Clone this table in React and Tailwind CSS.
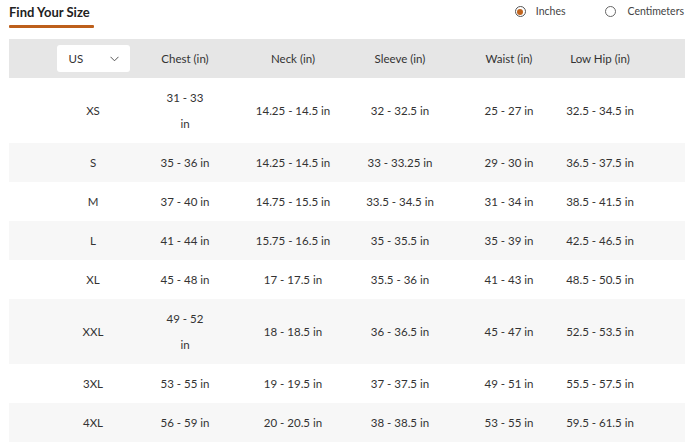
import React from "react";

const rows = [
  { size: "XS", chest: ["31 - 33", "in"], neck: "14.25 - 14.5 in", sleeve: "32 - 32.5 in", waist: "25 - 27 in", hip: "32.5 - 34.5 in" },
  { size: "S", chest: "35 - 36 in", neck: "14.25 - 14.5 in", sleeve: "33 - 33.25 in", waist: "29 - 30 in", hip: "36.5 - 37.5 in" },
  { size: "M", chest: "37 - 40 in", neck: "14.75 - 15.5 in", sleeve: "33.5 - 34.5 in", waist: "31 - 34 in", hip: "38.5 - 41.5 in" },
  { size: "L", chest: "41 - 44 in", neck: "15.75 - 16.5 in", sleeve: "35 - 35.5 in", waist: "35 - 39 in", hip: "42.5 - 46.5 in" },
  { size: "XL", chest: "45 - 48 in", neck: "17 - 17.5 in", sleeve: "35.5 - 36 in", waist: "41 - 43 in", hip: "48.5 - 50.5 in" },
  { size: "XXL", chest: ["49 - 52", "in"], neck: "18 - 18.5 in", sleeve: "36 - 36.5 in", waist: "45 - 47 in", hip: "52.5 - 53.5 in" },
  { size: "3XL", chest: "53 - 55 in", neck: "19 - 19.5 in", sleeve: "37 - 37.5 in", waist: "49 - 51 in", hip: "55.5 - 57.5 in" },
  { size: "4XL", chest: "56 - 59 in", neck: "20 - 20.5 in", sleeve: "38 - 38.5 in", waist: "53 - 55 in", hip: "59.5 - 61.5 in" },
];

function Cell({ w, children }) {
  return (
    <div className={`${w} flex flex-col items-center justify-center whitespace-nowrap text-center`}>
      {children}
    </div>
  );
}

export default function App() {
  return (
    <div className="w-[700px] h-[445px] bg-white text-[#333333] font-['Lato',sans-serif] overflow-hidden">
      <div className="flex justify-between h-[39px] pl-[9px] pr-[16px]">
        <div className="flex flex-col">
          <div className="pt-[4px] text-[13px] leading-[16px] font-bold text-[#222222]">Find Your Size</div>
          <div className="mt-[5px] h-[3px] w-[85px] bg-[#bd5f1b] rounded-[1px]" />
        </div>
        <div className="flex items-center h-[23px] text-[10.5px] text-[#444444]">
          <div className="w-[11px] h-[11px] rounded-full border border-[#555555] flex items-center justify-center">
            <div className="w-[6px] h-[6px] rounded-full bg-[#c0641e]" />
          </div>
          <span className="ml-[10px]">Inches</span>
          <div className="ml-[39px] w-[11px] h-[11px] rounded-full border border-[#666666]" />
          <span className="ml-[12px]">Centimeters</span>
        </div>
      </div>

      <div className="ml-[9px] w-[676px] text-[11.5px]">
        <div className="flex h-[39px] bg-[#e6e6e6] pl-[38px]">
          <Cell w="w-[92px]">
            <div className="w-[73px] h-[27px] bg-white rounded-[3px] flex items-center justify-between pl-[12px] pr-[11px]">
              <span className="text-[11.5px]">US</span>
              <svg width="9" height="6" viewBox="0 0 9 6" fill="none">
                <polyline points="0.5,0.8 4.5,4.8 8.5,0.8" stroke="#555555" strokeWidth="1" />
              </svg>
            </div>
          </Cell>
          <Cell w="w-[92px]">Chest (in)</Cell>
          <Cell w="w-[124px]">Neck (in)</Cell>
          <Cell w="w-[90px]">Sleeve (in)</Cell>
          <Cell w="w-[128px]">Waist (in)</Cell>
          <Cell w="w-[54px]">Low Hip (in)</Cell>
        </div>
        {rows.map((r, i) => (
          <div
            key={r.size}
            className={`flex pl-[38px] py-[6.5px] leading-[26px] ${i % 2 === 1 ? "bg-[#f7f7f7]" : "bg-white"}`}
          >
            <Cell w="w-[92px]">{r.size}</Cell>
            <Cell w="w-[92px]">
              {Array.isArray(r.chest) ? (
                <>
                  <span>{r.chest[0]}</span>
                  <span>{r.chest[1]}</span>
                </>
              ) : (
                r.chest
              )}
            </Cell>
            <Cell w="w-[124px]">{r.neck}</Cell>
            <Cell w="w-[90px]">{r.sleeve}</Cell>
            <Cell w="w-[128px]">{r.waist}</Cell>
            <Cell w="w-[54px]">{r.hip}</Cell>
          </div>
        ))}
      </div>
    </div>
  );
}
